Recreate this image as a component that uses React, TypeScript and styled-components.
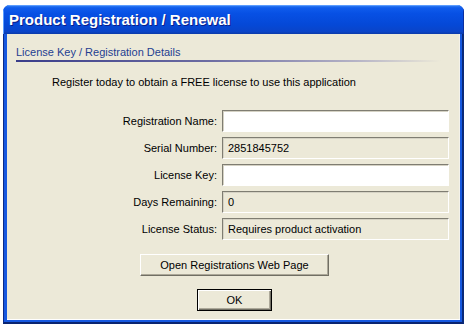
import React from 'react';
import styled, { createGlobalStyle, css } from 'styled-components';

const GlobalStyle = createGlobalStyle`
    html, body {
        margin: 0;
        padding: 0;
        background: #ffffff;
    }
    body {
        width: 467px;
        height: 328px;
        overflow: hidden;
    }
`;

interface FieldProps {
    readOnly?: boolean
}

interface ButtonProps {
    isDefault?: boolean
}

const rows = [
    { label: 'Registration Name:', value: '', readOnly: false },
    { label: 'Serial Number:', value: '2851845752', readOnly: true },
    { label: 'License Key:', value: '', readOnly: false },
    { label: 'Days Remaining:', value: '0', readOnly: true },
    { label: 'License Status:', value: 'Requires product activation', readOnly: true },
];

const App = () => {
    return (
        <>
            <GlobalStyle />
            <Page>
                <Window>
                    <TitleBar>Product Registration / Renewal</TitleBar>
                    <Frame>
                        <Body>
                            <SectionTitle>License Key / Registration Details</SectionTitle>
                            <Intro>Register today to obtain a FREE license to use this application</Intro>
                            <Form>
                                {rows.map(row => (
                                    <React.Fragment key={row.label}>
                                        <Label>{row.label}</Label>
                                        <Field readOnly={row.readOnly}>{row.value}</Field>
                                    </React.Fragment>
                                ))}
                            </Form>
                            <Actions>
                                <Button>Open Registrations Web Page</Button>
                                <Button isDefault>OK</Button>
                            </Actions>
                        </Body>
                    </Frame>
                </Window>
            </Page>
        </>
    );
};

export default App;

const Page = styled.div`
    padding: 5px 0 0 3px;
`;

const Window = styled.div`
    width: 461px;
    height: 319px;
    display: flex;
    flex-direction: column;
    border-radius: 7px 7px 0 0;
    overflow: hidden;
    background: #0a3fd0;
`;

const TitleBar = styled.div`
    height: 29px;
    flex: none;
    display: flex;
    align-items: center;
    padding: 0 0 1px 6px;
    box-sizing: border-box;
    font-family: 'Liberation Sans', Arial, sans-serif;
    font-weight: bold;
    font-size: 15px;
    color: #ffffff;
    text-shadow: 1px 1px 0 #0a1e8a;
    background: linear-gradient(180deg,
        #3d86f4 0%,
        #0f5cec 10%,
        #0750e4 30%,
        #0548d6 70%,
        #0a44c8 92%,
        #0b3aa8 100%);
    box-shadow: inset 1px 1px 0 #5a9cff, inset -1px 0 0 #0a2fa0;
`;

const Frame = styled.div`
    flex: 1;
    display: flex;
    border-left: 1px solid #0a2a88;
    border-right: 2px solid #0a2a7a;
    border-bottom: 2px solid #0a2470;
    background: #1658e0;
    padding: 0 2px 2px 3px;
`;

const Body = styled.div`
    flex: 1;
    display: flex;
    flex-direction: column;
    background: #ece9d8;
    font-family: 'Liberation Sans', Arial, sans-serif;
    font-size: 11px;
    color: #000000;
    box-shadow: inset 0 -1px 0 #ffffff, inset -1px 0 0 #f4f2ea;
`;

const SectionTitle = styled.div`
    margin: 12px 19px 0 9px;
    padding-bottom: 4px;
    line-height: 13px;
    color: #1f3e91;
    &::after {
        content: '';
        display: block;
        height: 2px;
        margin-top: 1px;
        background: linear-gradient(90deg, #3a3d8a 0%, #6c6ca2 45%, #b5b3c6 80%, rgba(236, 233, 216, 0) 100%);
    }
`;

const Intro = styled.div`
    margin: 10px 0 0 45px;
    line-height: 13px;
`;

const Form = styled.div`
    display: grid;
    grid-template-columns: 210px 227px;
    column-gap: 5px;
    row-gap: 5px;
    margin-top: 21px;
    align-items: center;
`;

const Label = styled.div`
    text-align: right;
`;

const Field = styled.div<FieldProps>`
    height: 22px;
    box-sizing: border-box;
    display: flex;
    align-items: center;
    padding: 0 5px;
    background: #ffffff;
    border-top: 1px solid #7f7d72;
    border-left: 1px solid #7f7d72;
    border-right: 1px solid #ffffff;
    border-bottom: 1px solid #ffffff;
    box-shadow: inset 1px 1px 0 #d5d2c4;
    ${(props: FieldProps) => props.readOnly && css`
        background: #ece9d8;
    `};
`;

const Actions = styled.div`
    display: flex;
    flex-direction: column;
    align-items: flex-start;
    gap: 13px;
    margin-top: 14px;
`;

const Button = styled.button<ButtonProps>`
    font-family: 'Liberation Sans', Arial, sans-serif;
    font-size: 11px;
    color: #000000;
    background: #ece9d8;
    height: 22px;
    width: 189px;
    margin-left: 133px;
    padding: 0;
    box-sizing: border-box;
    border-top: 1px solid #ffffff;
    border-left: 1px solid #ffffff;
    border-right: 1px solid #716f64;
    border-bottom: 1px solid #716f64;
    box-shadow: inset -1px -1px 0 #aca899;
    ${(props: ButtonProps) => props.isDefault && css`
        width: 75px;
        margin-left: 190px;
        border: 1px solid #000000;
        box-shadow: inset 1px 1px 0 #ffffff, inset -1px -1px 0 #716f64, inset -2px -2px 0 #aca899;
    `};
`;
